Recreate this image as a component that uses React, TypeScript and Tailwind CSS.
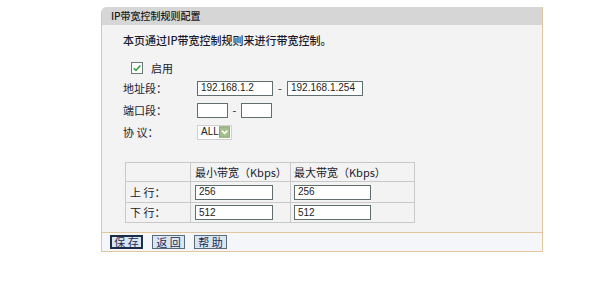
import React from "react";

const cjk = { fontFamily: '"Noto Sans CJK SC", "Noto Sans", sans-serif' };
const num = { fontFamily: '"Liberation Sans", "Noto Sans CJK SC", sans-serif' };

function Input({ w, value }: { w: string; value?: string }) {
  return (
    <div
      className={`${w} h-[15px] bg-white border border-[#5f6e6e] flex items-center pl-[3px] text-[10px] text-[#222] leading-none`}
      style={num}
    >
      {value}
    </div>
  );
}

function Btn({ label, active }: { label: string; active?: boolean }) {
  return (
    <div
      className={`h-[14px] w-[33px] flex items-center justify-center bg-[#d9e5f1] text-[11px] leading-none text-[#1a2a55] ${
        active ? "border-2 border-[#1d2d44]" : "border border-[#5a6a7a]"
      }`}
      style={cjk}
    >
      {label}
    </div>
  );
}

export default function App() {
  return (
    <div className="w-[600px] h-[301px] bg-white overflow-hidden">
      <div className="ml-[101px] mt-[7px] w-[442px] border-x border-b border-[#e2c69e] rounded-tl-[6px]">
        <div
          className="h-[18px] bg-[#d6d6d6] rounded-tl-[5px] flex items-center pl-[9px] text-[10px] text-[#1a1a1a] leading-none font-medium"
          style={cjk}
        >
          IP带宽控制规则配置
        </div>
        <div className="bg-[#f3f3f3] h-[207px] pl-[21px] flex flex-col text-[11px] text-[#1b1b2e]" style={cjk}>
          <div className="mt-[8px] h-[14px] flex items-center leading-none font-medium">
            本页通过IP带宽控制规则来进行带宽控制。
          </div>
          <div className="mt-[14px] h-[14px] flex items-center pl-[8px] gap-[8px] leading-none">
            <svg width="12" height="12" viewBox="0 0 12 12">
              <rect x="0.5" y="0.5" width="11" height="11" fill="#fff" stroke="#6b7b7b" />
              <path d="M2.8 6.2 L5 8.4 L9.3 3.4" fill="none" stroke="#3a9a3a" strokeWidth="1.6" />
            </svg>
            <span>启用</span>
          </div>
          <div className="mt-[5px] h-[16px] flex items-center leading-none">
            <span className="w-[74px]">地址段：</span>
            <Input w="w-[76px]" value="192.168.1.2" />
            <span className="w-[14px] text-center">-</span>
            <Input w="w-[76px]" value="192.168.1.254" />
          </div>
          <div className="mt-[6px] h-[16px] flex items-center leading-none">
            <span className="w-[74px]">端口段：</span>
            <Input w="w-[31px]" />
            <span className="w-[13px] text-center">-</span>
            <Input w="w-[31px]" />
          </div>
          <div className="mt-[6px] h-[16px] flex items-center leading-none">
            <span className="w-[74px]">协&nbsp;议：</span>
            <div className="w-[35px] h-[15px] bg-white border border-[#d0d0d0] flex items-center justify-between pl-[3px] pr-[1px]">
              <span className="text-[10px] text-[#222]" style={num}>ALL</span>
              <svg width="12" height="12" viewBox="0 0 12 12">
                <rect x="0" y="0" width="12" height="12" fill="#a3c08c" />
                <rect x="0.5" y="0.5" width="11" height="11" fill="none" stroke="#8aa874" />
                <path d="M3 4.5 L6 7.5 L9 4.5" fill="none" stroke="#fff" strokeWidth="1.6" />
              </svg>
            </div>
          </div>
          <table className="mt-[22px] ml-[2px] w-[290px] border-collapse text-[11px] leading-none">
            <tbody>
              <tr className="h-[19px]">
                <td className="w-[65px] border border-[#c9c9c9]"></td>
                <td className="w-[100px] border border-[#c9c9c9] pl-[4px]">最小带宽（Kbps）</td>
                <td className="border border-[#c9c9c9] pl-[3px]">最大带宽（Kbps）</td>
              </tr>
              <tr className="h-[21px]">
                <td className="border border-[#c9c9c9] pl-[4px]">上&nbsp;行：</td>
                <td className="border border-[#c9c9c9] pl-[4px]">
                  <Input w="w-[78px]" value="256" />
                </td>
                <td className="border border-[#c9c9c9] pl-[3px]">
                  <Input w="w-[77px]" value="256" />
                </td>
              </tr>
              <tr className="h-[20px]">
                <td className="border border-[#c9c9c9] pl-[4px]">下&nbsp;行：</td>
                <td className="border border-[#c9c9c9] pl-[4px]">
                  <Input w="w-[78px]" value="512" />
                </td>
                <td className="border border-[#c9c9c9] pl-[3px]">
                  <Input w="w-[77px]" value="512" />
                </td>
              </tr>
            </tbody>
          </table>
        </div>
        <div className="border-t border-[#e2c69e] bg-[#f4f6f9] h-[19px] flex items-center pl-[8px] gap-[9px]">
          <Btn label="保 存" active />
          <Btn label="返 回" />
          <Btn label="帮 助" />
        </div>
      </div>
    </div>
  );
}
